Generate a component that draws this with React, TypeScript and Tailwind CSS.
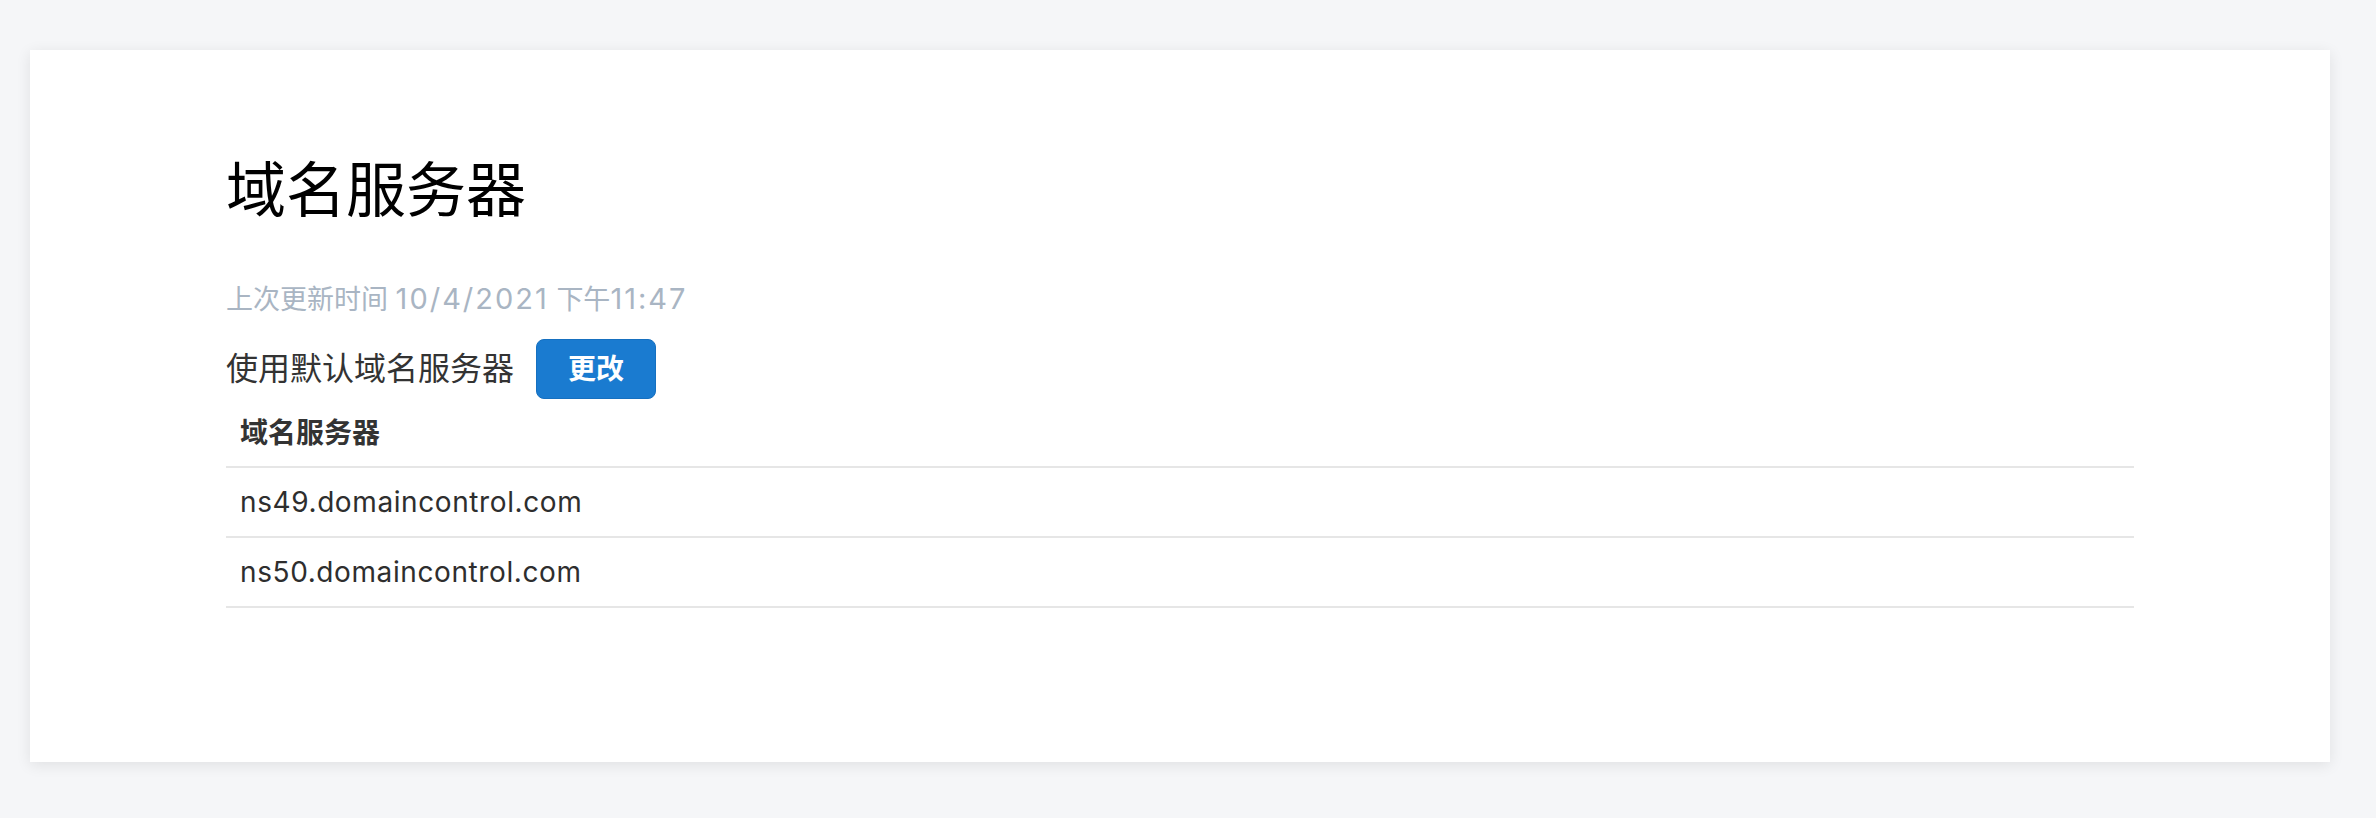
const nameservers = ['ns49.domaincontrol.com', 'ns50.domaincontrol.com']

const font = "font-['Inter','Noto_Sans_CJK_SC',sans-serif]"

export default function App() {
  return (
    <div className={`min-h-screen bg-[#f5f6f8] pl-[30px] pr-[46px] pt-[50px] pb-[56px] ${font}`}>
      <div className="bg-white shadow-[0_3px_14px_rgba(0,0,0,0.09)] px-[196px] pt-[105px] pb-[154px]">
        <h1 className="text-[60px] leading-[70px] text-black font-normal">域名服务器</h1>
        <p className="mt-[56px] text-[27px] leading-[36px] text-[#a9b5c3]">
          上次更新时间 <span className="text-[29px] tracking-[2px]">10/4/2021</span> 下午
          <span className="text-[29px] tracking-[2px]">11:47</span>
        </p>
        <div className="mt-[21px] flex items-center gap-[22px]">
          <span className="text-[32px] leading-[40px] text-[#333]">使用默认域名服务器</span>
          <button className="h-[60px] w-[120px] rounded-[8px] bg-[#1a7bd0] border border-[#1670c0] text-white text-[28px] font-bold">
            更改
          </button>
        </div>
        <table className="w-full border-collapse">
          <thead>
            <tr className="border-b-2 border-[#e6e6e6]">
              <th className="h-[68px] pl-[14px] text-left text-[28px] font-bold text-[#333]">域名服务器</th>
            </tr>
          </thead>
          <tbody>
            {nameservers.map((ns) => (
              <tr key={ns} className="border-b-2 border-[#e6e6e6]">
                <td className="h-[70px] pl-[14px] text-[28px] tracking-[0.6px] text-[#2e2e2e]">{ns}</td>
              </tr>
            ))}
          </tbody>
        </table>
      </div>
    </div>
  )
}
